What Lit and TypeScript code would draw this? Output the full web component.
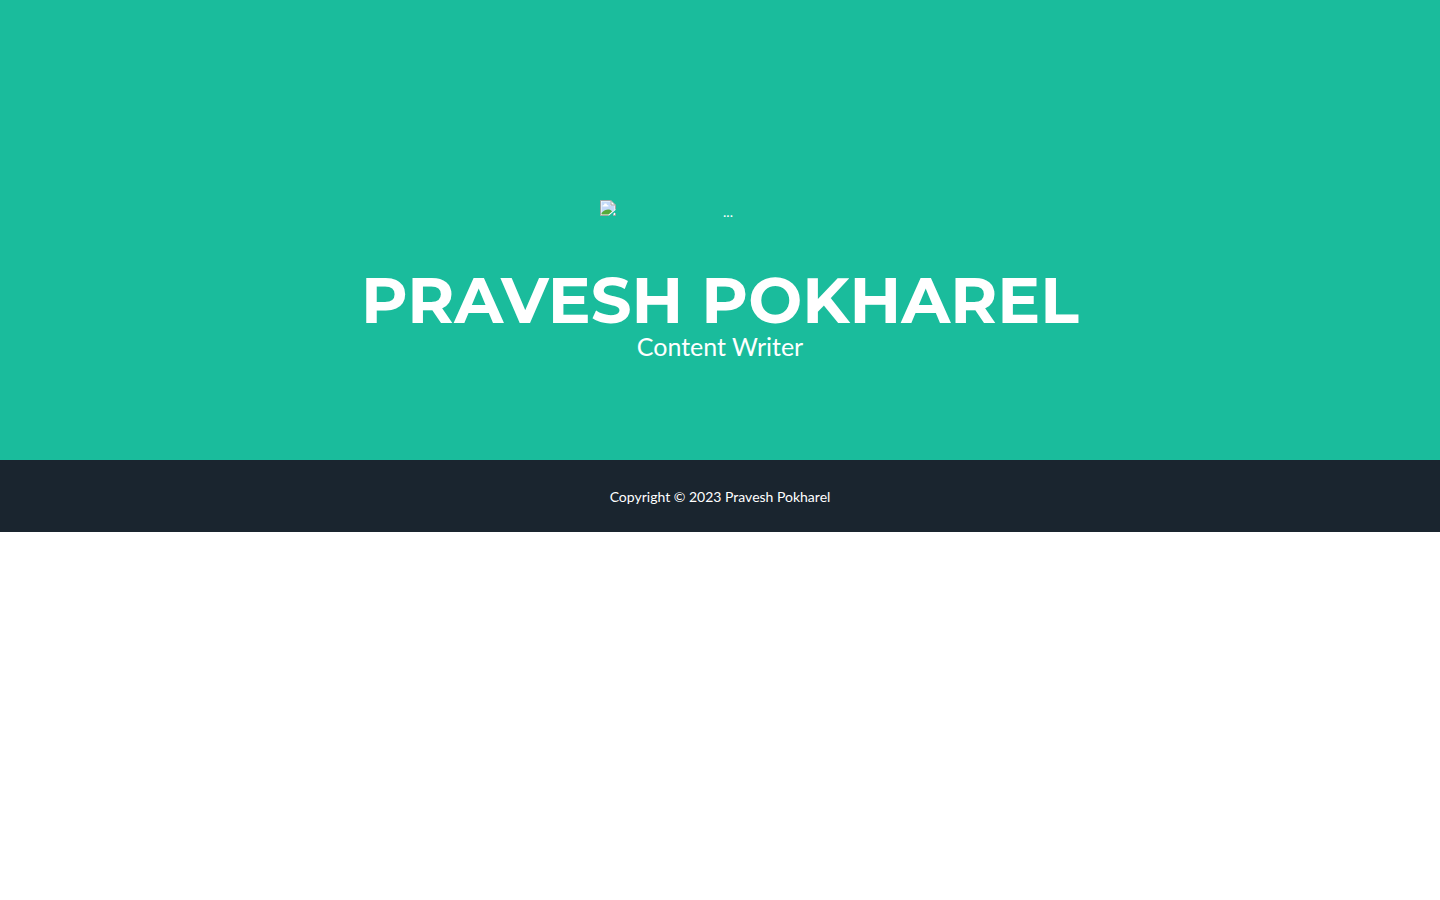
import { LitElement, html, css } from "lit";
import { customElement } from "lit/decorators.js";

@customElement("app-root")
export class AppRoot extends LitElement {
  static styles = css`
    :host {
      display: block;
      min-height: 100vh;
      background: #fff;
      color: #fff;
      font: 400 14px/24px Lato, sans-serif;
    }
    * {
      box-sizing: border-box;
    }
    .masthead {
      display: flex;
      flex-direction: column;
      align-items: center;
      padding: 200px 16px 100px;
      background: #1abc9c;
      text-align: center;
    }
    .avatar {
      display: flex;
      align-items: flex-start;
      width: 240px;
      max-width: 100%;
      margin-bottom: 44px;
    }
    .missing {
      flex: none;
      width: 16px;
      height: 16px;
    }
    .alt {
      flex: 1;
    }
    .name {
      margin: 0;
      font: 700 64px/64px Montserrat, Inter, sans-serif;
      text-transform: uppercase;
    }
    .role {
      margin: 0;
      font-size: 25px;
      line-height: 28px;
    }
    .copyright {
      padding: 24px 16px 22px;
      background: #1a252f;
      line-height: 26px;
      text-align: center;
    }
  `;

  render() {
    return html`
      <header class="masthead">
        <div class="avatar">
          <svg class="missing" viewBox="0 0 16 16" aria-hidden="true">
            <path d="M0.5 0.5H11L15.5 5V10L9 15.5H0.5Z" fill="#fff" />
            <path d="M1.5 1.5H10.5V5.5H14.5V10L9 14H1.5Z" fill="#c3d9f7" />
            <path d="M2.5 6.5V5.5L4 5L4.5 3.5H6.5L7 5L8.5 5.5V6.5Z" fill="#fff" />
            <path d="M1.5 14.5V13C4 10 6 9.5 8 9.5S11 10 12 11.5L8.5 14.5Z" fill="#57ab3b" />
            <path
              d="M8.5 15.5H0.5V0.5H11L15.5 5V9M11 0.5V5H15.5M13 15.5H15.5V13"
              fill="none"
              stroke="#a4a4a4"
            />
            <path d="M13.5 15V13.5L15 12.5V15Z" fill="#fff" />
          </svg>
          <span class="alt">...</span>
        </div>
        <h1 class="name">Pravesh Pokharel</h1>
        <p class="role">Content Writer</p>
      </header>
      <footer class="copyright">Copyright © 2023 Pravesh Pokharel</footer>
    `;
  }
}
